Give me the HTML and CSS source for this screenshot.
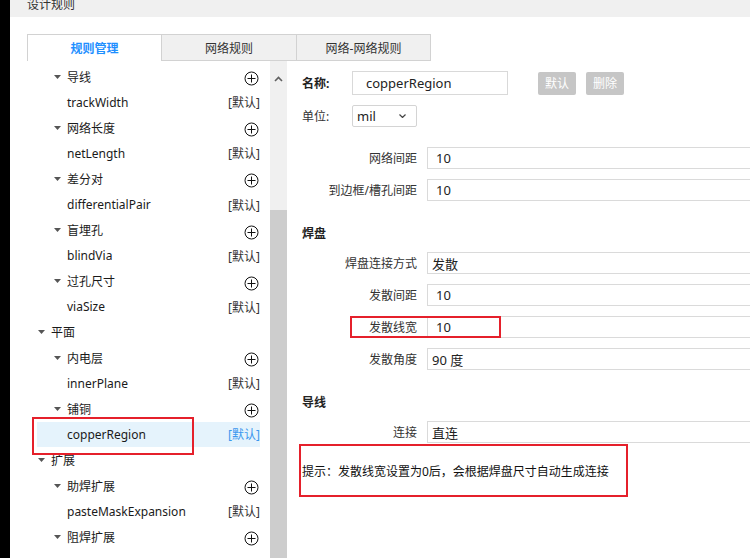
FILE: index.html
```html
<!DOCTYPE html>
<html lang="zh-CN">
<head>
<meta charset="utf-8">
<title>设计规则</title>
<link rel="stylesheet" href="styles.css">
</head>
<body>
<div class="app">
  <div class="strip"></div>
  <div class="main">
    <div class="titlebar"><span class="title">设计规则</span></div>
    <div class="content">
      <div class="tabs">
        <div class="tab active">规则管理</div>
        <div class="tab">网络规则</div>
        <div class="tab">网络-网络规则</div>
      </div>
      <div class="body">
        <div class="left">
          <div class="tree">
            <div class="row l2"><svg class="tri" viewBox="0 0 7 4"><polygon points="0,0 7,0 3.5,4"/></svg><span class="name">导线</span><svg class="plus" viewBox="0 0 15 15"><circle cx="7.5" cy="7.5" r="6.5"/><path d="M3.5 7.5H11.5M7.5 3.5V11.5"/></svg></div>
            <div class="row leaf"><span class="name">trackWidth</span><span class="def">[默认]</span></div>
            <div class="row l2"><svg class="tri" viewBox="0 0 7 4"><polygon points="0,0 7,0 3.5,4"/></svg><span class="name">网络长度</span><svg class="plus" viewBox="0 0 15 15"><circle cx="7.5" cy="7.5" r="6.5"/><path d="M3.5 7.5H11.5M7.5 3.5V11.5"/></svg></div>
            <div class="row leaf"><span class="name">netLength</span><span class="def">[默认]</span></div>
            <div class="row l2"><svg class="tri" viewBox="0 0 7 4"><polygon points="0,0 7,0 3.5,4"/></svg><span class="name">差分对</span><svg class="plus" viewBox="0 0 15 15"><circle cx="7.5" cy="7.5" r="6.5"/><path d="M3.5 7.5H11.5M7.5 3.5V11.5"/></svg></div>
            <div class="row leaf"><span class="name">differentialPair</span><span class="def">[默认]</span></div>
            <div class="row l2"><svg class="tri" viewBox="0 0 7 4"><polygon points="0,0 7,0 3.5,4"/></svg><span class="name">盲埋孔</span><svg class="plus" viewBox="0 0 15 15"><circle cx="7.5" cy="7.5" r="6.5"/><path d="M3.5 7.5H11.5M7.5 3.5V11.5"/></svg></div>
            <div class="row leaf"><span class="name">blindVia</span><span class="def">[默认]</span></div>
            <div class="row l2"><svg class="tri" viewBox="0 0 7 4"><polygon points="0,0 7,0 3.5,4"/></svg><span class="name">过孔尺寸</span><svg class="plus" viewBox="0 0 15 15"><circle cx="7.5" cy="7.5" r="6.5"/><path d="M3.5 7.5H11.5M7.5 3.5V11.5"/></svg></div>
            <div class="row leaf"><span class="name">viaSize</span><span class="def">[默认]</span></div>
            <div class="row l1"><svg class="tri" viewBox="0 0 7 4"><polygon points="0,0 7,0 3.5,4"/></svg><span class="name">平面</span></div>
            <div class="row l2"><svg class="tri" viewBox="0 0 7 4"><polygon points="0,0 7,0 3.5,4"/></svg><span class="name">内电层</span><svg class="plus" viewBox="0 0 15 15"><circle cx="7.5" cy="7.5" r="6.5"/><path d="M3.5 7.5H11.5M7.5 3.5V11.5"/></svg></div>
            <div class="row leaf"><span class="name">innerPlane</span><span class="def">[默认]</span></div>
            <div class="row l2"><svg class="tri" viewBox="0 0 7 4"><polygon points="0,0 7,0 3.5,4"/></svg><span class="name">铺铜</span><svg class="plus" viewBox="0 0 15 15"><circle cx="7.5" cy="7.5" r="6.5"/><path d="M3.5 7.5H11.5M7.5 3.5V11.5"/></svg></div>
            <div class="row leaf selected"><span class="name">copperRegion</span><span class="def">[默认]</span></div>
            <div class="row l1"><svg class="tri" viewBox="0 0 7 4"><polygon points="0,0 7,0 3.5,4"/></svg><span class="name">扩展</span></div>
            <div class="row l2"><svg class="tri" viewBox="0 0 7 4"><polygon points="0,0 7,0 3.5,4"/></svg><span class="name">助焊扩展</span><svg class="plus" viewBox="0 0 15 15"><circle cx="7.5" cy="7.5" r="6.5"/><path d="M3.5 7.5H11.5M7.5 3.5V11.5"/></svg></div>
            <div class="row leaf"><span class="name">pasteMaskExpansion</span><span class="def">[默认]</span></div>
            <div class="row l2"><svg class="tri" viewBox="0 0 7 4"><polygon points="0,0 7,0 3.5,4"/></svg><span class="name">阻焊扩展</span><svg class="plus" viewBox="0 0 15 15"><circle cx="7.5" cy="7.5" r="6.5"/><path d="M3.5 7.5H11.5M7.5 3.5V11.5"/></svg></div>
          </div>
          <div class="scrollbar">
            <div class="sb-up"><svg viewBox="0 0 9 6"><polyline points="1,5 4.5,1.5 8,5"/></svg></div>
            <div class="sb-thumb"></div>
          </div>
          <div class="mark mark-tree"></div>
        </div>
        <div class="right">
          <div class="name-row">
            <span class="lbl-bold">名称:</span>
            <div class="input name-input">copperRegion</div>
            <div class="btn">默认</div>
            <div class="btn">删除</div>
          </div>
          <div class="unit-row">
            <span class="lbl">单位:</span>
            <div class="select"><span>mil</span><svg viewBox="0 0 7 4"><polyline points="0.5,0.5 3.5,3.5 6.5,0.5"/></svg></div>
          </div>
          <div class="form first">
            <div class="frow"><span class="flabel">网络间距</span><div class="field num">10</div></div>
            <div class="frow"><span class="flabel">到边框/槽孔间距</span><div class="field num">10</div></div>
          </div>
          <div class="section">焊盘</div>
          <div class="form">
            <div class="frow"><span class="flabel">焊盘连接方式</span><div class="field sel">发散</div></div>
            <div class="frow"><span class="flabel">发散间距</span><div class="field num">10</div></div>
            <div class="frow"><span class="flabel">发散线宽</span><div class="field num">10</div></div>
            <div class="frow"><span class="flabel">发散角度</span><div class="field sel">90 度</div></div>
          </div>
          <div class="section">导线</div>
          <div class="form">
            <div class="frow"><span class="flabel">连接</span><div class="field sel">直连</div></div>
          </div>
          <div class="hint">提示：发散线宽设置为0后，会根据焊盘尺寸自动生成连接</div>
          <div class="mark mark-width"></div>
        </div>
      </div>
    </div>
  </div>
</div>
</body>
</html>
```

FILE: styles.css
```css
* { box-sizing: border-box; }
html, body { margin: 0; padding: 0; }
body {
  width: 750px;
  height: 558px;
  overflow: hidden;
  background: #fff;
  font-family: "Noto Sans", "Noto Sans CJK SC", sans-serif;
  font-size: 12px;
  color: #222;
}
.app { display: flex; height: 558px; }
.strip {
  width: 10px;
  flex: none;
  background: #000;
  display: flex;
  justify-content: center;
}
.strip::before {
  content: "";
  width: 2px;
  margin-left: 1px;
  background: repeating-linear-gradient(to bottom, transparent 0 11px, #8a8a8a 11px 13px, transparent 13px 20px);
  background-size: 2px 10px;
}
.main { flex: 1; display: flex; flex-direction: column; min-width: 0; }
.titlebar {
  height: 17px;
  background: #f0f0f0;
  overflow: hidden;
  padding-left: 17px;
}
.title { display: block; line-height: 9px; color: #333; }
.content { flex: 1; padding: 17px 0 0 17px; display: flex; flex-direction: column; min-height: 0; }
.tabs { display: flex; height: 27px; flex: none; }
.tab {
  width: 135px;
  height: 27px;
  display: flex;
  align-items: center;
  justify-content: center;
  background: #f0f0f0;
  border: 1px solid #d2d2d2;
  border-left: none;
  color: #333;
  font-size: 12px;
}
.tab:last-child { width: 134px; }
.tab.active {
  background: #fff;
  border-left: 1px solid #d2d2d2;
  border-bottom: none;
  color: #1e8fff;
  font-weight: bold;
}
.body { flex: 1; display: flex; min-height: 0; }
.left { width: 260px; flex: none; display: flex; position: relative; }
.tree { width: 243px; flex: none; padding-top: 3px; overflow: hidden; }
.row {
  height: 25.56px;
  margin: 0 10px;
  display: flex;
  align-items: center;
  color: #1a1a1a;
}
.row .name { flex: 1; white-space: nowrap; }
.row.l1 { padding-left: 1px; }
.row.l2 { padding-left: 17px; padding-right: 1px; }
.row.leaf { padding-left: 30px; }
.tri { width: 7px; height: 4px; margin-right: 6px; fill: #555; flex: none; }
.plus { width: 15px; height: 15px; margin-top: 4px; fill: none; stroke: #111; stroke-width: 1; flex: none; }
.def { color: #333; }
.row.selected { background: #e5f3fc; }
.row.selected .def { color: #3a97ee; }
.scrollbar {
  width: 17px;
  flex: none;
  background: #f0f0f0;
  display: flex;
  flex-direction: column;
}
.sb-up { height: 36px; display: flex; align-items: center; justify-content: center; }
.sb-up svg { width: 9px; height: 6px; fill: none; stroke: #606060; stroke-width: 1.6; }
.sb-thumb { flex: 1; margin-top: 113px; background: #cdcdcd; }
.mark { position: absolute; border: 2px solid #e5202b; }
.mark-tree { left: 5px; top: 356px; width: 162px; height: 38px; }
.right {
  flex: 1;
  min-width: 0;
  position: relative;
  overflow: hidden;
  padding: 10px 0 0 15px;
  color: #333;
}
.name-row { display: flex; align-items: center; height: 24px; }
.lbl-bold { width: 50px; flex: none; font-weight: bold; color: #222; }
.lbl { width: 50px; flex: none; color: #333; }
.input {
  border: 1px solid #d9d9d9;
  height: 24px;
  display: flex;
  align-items: center;
}
.name-input { width: 156px; flex: none; padding-left: 13px; font-size: 13px; color: #222; }
.btn {
  width: 38px;
  height: 23px;
  flex: none;
  margin-left: 10px;
  background: #c6c6c6;
  color: #fff;
  border-radius: 2px;
  display: flex;
  align-items: center;
  justify-content: center;
}
.name-input + .btn { margin-left: 30px; }
.unit-row { display: flex; align-items: center; height: 22px; margin-top: 10px; }
.select {
  width: 65px;
  height: 22px;
  flex: none;
  border: 1px solid #d4d4d4;
  border-radius: 2px;
  display: flex;
  align-items: center;
  justify-content: space-between;
  padding: 0 10px 0 4px;
  font-size: 13px;
  color: #222;
}
.select svg { width: 7px; height: 4px; fill: none; stroke: #444; stroke-width: 1.2; }
.form { display: flex; flex-direction: column; gap: 10px; }
.form.first { margin-top: 20px; }
.frow { display: flex; align-items: center; height: 22px; }
.flabel { width: 115px; flex: none; text-align: right; margin-right: 10px; color: #333; white-space: nowrap; }
.field {
  width: 340px;
  height: 22px;
  flex: none;
  border: 1px solid #dadada;
  display: flex;
  align-items: center;
  color: #222;
  font-size: 13px;
}
.field.num { padding-left: 8px; }
.field.sel { padding-left: 4px; }
.section {
  line-height: 20px;
  margin: 23px 0 8px;
  font-weight: bold;
  color: #222;
}
.hint {
  margin: 1px 0 0 -3px;
  width: 329px;
  height: 53px;
  border: 2px solid #e5202b;
  display: flex;
  align-items: center;
  padding-left: 1px;
  color: #111;
  white-space: nowrap;
}
.mark-width { left: 63px; top: 255px; width: 151px; height: 22px; }
```
